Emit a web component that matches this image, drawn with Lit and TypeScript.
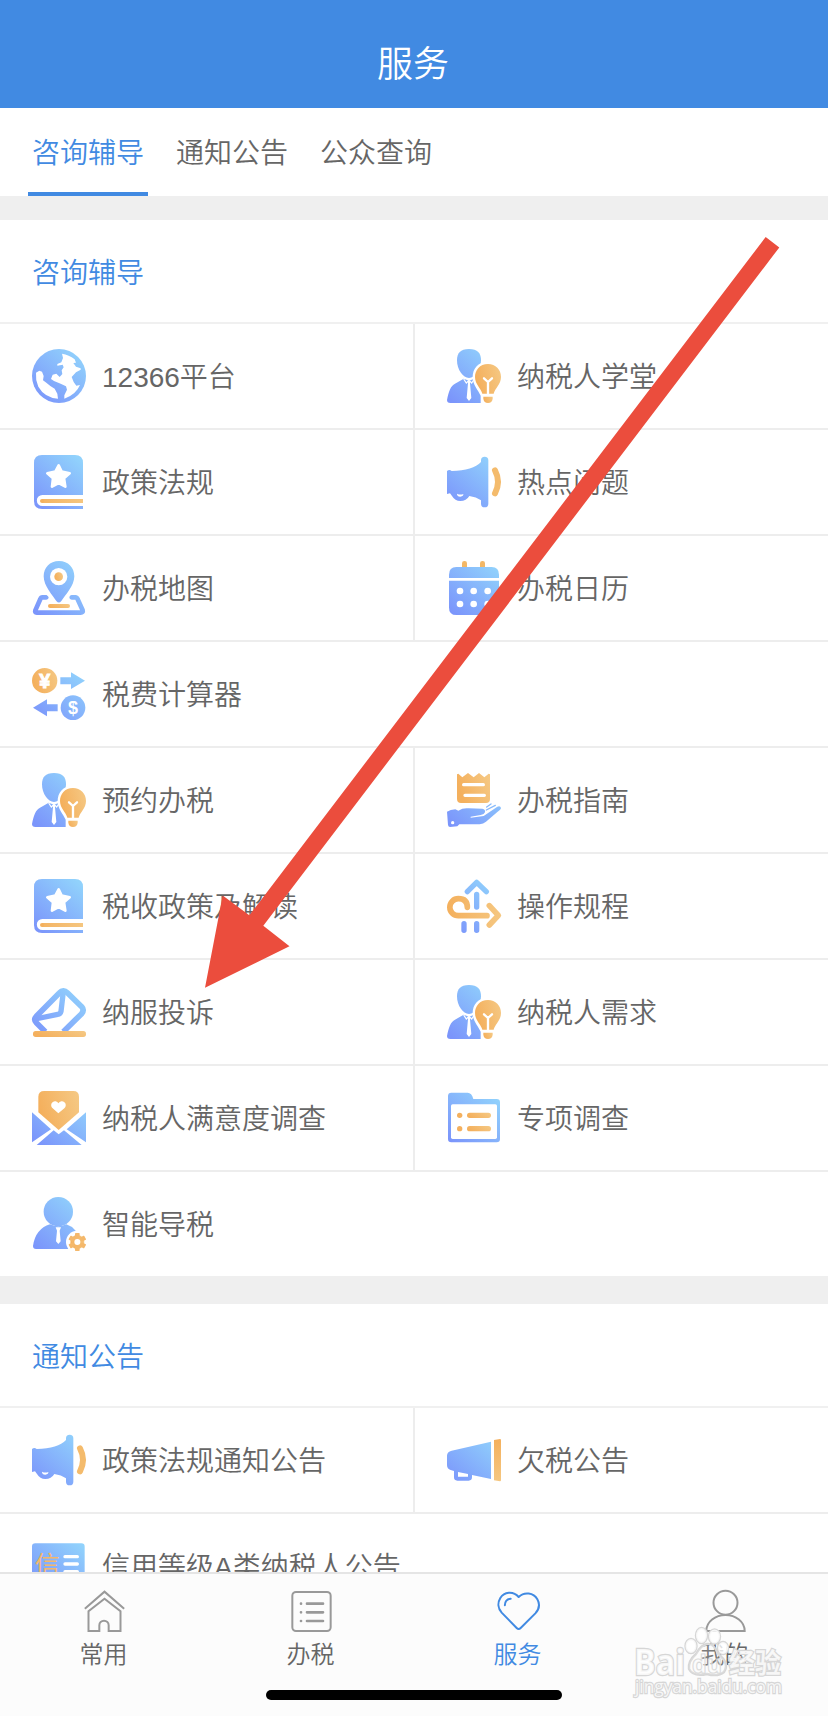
import { LitElement, html, css, svg } from "lit";
import { customElement, property } from "lit/decorators.js";

const book = svg`
  <path fill="url(#b)" d="M30 0H129Q153 0 153 24V162H30Q6 162 6 138V24Q6 0 30 0Z"/>
  <path fill="#fff" d="M160 120H31A16.500 16.500 0 0 0 31 153H160Z"/>
  <path d="M30 138H153" stroke="url(#ou)" stroke-width="12"/><circle cx="30" cy="138" r="6" fill="#f4b05e"/>
  <path fill="#fff" stroke="#fff" stroke-width="8" stroke-linejoin="round" d="M80 31L89 50L113 55L96 70L100 95L80 84L60 95L63 70L46 55L70 50Z"/>`;

const advisor = svg`
  <path fill="url(#b)" d="M66 0C92 0 102 12 102 34C102 62 84 87 66 87C48 87 30 62 30 34C30 12 40 0 66 0Z"/>
  <path fill="url(#b)" d="M0 153C5 128 11 110 24 104L50 89L66 95L82 89L102 99V162H10Q0 162 0 153Z"/>
  <path fill="none" stroke="#fff" stroke-width="3.500" d="M50 90L58 102L66 94L74 102L82 90"/>
  <path fill="#fff" d="M62 95H70L69 103L73 147L66 156L59 147L63 103Z"/>
  <path fill="#fff" d="M123 38C92 38 77 60 77 84C77 108 94 124 101 140V162H145V140C154 124 170 108 170 84C170 56 150 38 123 38Z"/>
  <path fill="url(#o)" d="M123 45C98 45 84 64 84 84C84 106 102 118 106 134H140C144 118 162 106 162 84C162 62 146 45 123 45Z"/>
  <path fill="url(#o)" d="M109 143H137V149Q135 162 123 162Q111 162 109 149Z"/>
  <path fill="none" stroke="#fff" stroke-width="7" stroke-linecap="round" stroke-linejoin="round" d="M111 88L123 99L135 88M123 100V134"/>`;

const speaker = svg`
  <path fill="url(#b)" d="M0 48Q7 42 14 48Q78 47 102 21V16A11 11 0 0 1 124 16V146A11 11 0 0 1 102 146V136Q88 126 67 123Q58 138 40 138Q24 138 15 123L9 115L0 117Z"/>
  <path fill="#fff" d="M30 116Q40 121 49 117Q50 124 40 125Q30 125 30 116Z"/>
  <path fill="none" stroke="#f4bb6c" stroke-width="18" stroke-linecap="round" d="M144 46Q162 80 144 115"/>`;

const ICONS: Record<string, unknown> = {
  globe: svg`
    <circle cx="81" cy="81" r="81" fill="url(#b)"/>
    <path fill="#fff" d="M12 71L22 65L30 68L35 81L33 94L43 101L55 111L68 119L76 134L78 149Q38 146 19 113Q10 92 12 71Z"/>
    <path fill="#fff" d="M90 14Q111 17 128 31L132 41L124 42L132 53L146 58V62L132 70L119 84L125 99L133 110L144 108Q132 137 97 149V139L105 122L102 112L86 104L66 96L57 90L62 77L73 74L83 84L91 75L89 64L95 55L92 47L76 50V45L88 40L93 27Z"/>`,
  book,
  advisor,
  speaker,
  map: svg`
    <path fill="none" stroke="url(#b)" stroke-width="14" stroke-linecap="round" stroke-linejoin="round" d="M43 109H31Q27 109 25 114L10 148Q8 155 14 155H146Q154 155 152 148L137 115Q135 109 130 109H119"/>
    <path fill="#fff" d="M40 98H120L81 135Z"/>
    <path fill="url(#b)" d="M81 0C109 0 127 20 127 46C127 75 99 103 88 120Q81 129 73 120C62 103 35 75 35 46C35 20 53 0 81 0Z"/>
    <circle cx="80" cy="47" r="26" fill="#fff"/><circle cx="80" cy="47" r="13" fill="url(#o)"/>
    <rect x="48" y="129" width="66" height="12" rx="6" fill="url(#o)"/>`,
  calendar: svg`
    <rect x="45" y="0" width="15" height="26" rx="7" fill="#f4b866"/><rect x="99" y="0" width="15" height="26" rx="7" fill="#f4b866"/>
    <path fill="url(#b)" d="M28 18H134Q156 18 156 41V51H6V41Q6 18 28 18Z"/>
    <path fill="url(#b)" d="M6 59H156V140Q156 162 134 162H28Q6 162 6 140Z"/>
    ${[39, 80, 122].map(x => [90, 129].map(y => svg`<circle cx=${x} cy=${y} r="10" fill="#fff"/>`))}`,
  exchange: svg`
    <circle cx="38" cy="41" r="38" fill="url(#o)"/><circle cx="123" cy="122" r="37" fill="url(#b)"/>
    <path fill="url(#b)" d="M85 31H117V16L159 41L117 66V52H85Z"/>
    <path fill="url(#b)" d="M77 112H45V97L3 122L45 148V133H77Z"/>
    <text class="coin" x="38" y="62" font-size="59" stroke="#fff" stroke-width="3">¥</text><text class="coin" x="123" y="141" font-size="54">$</text>`,
  receipt: svg`
    <path fill="url(#o)" d="M30 4L34 2L46 13L63 0L80 13L96 0L112 13L125 2L129 4V78Q129 90 117 90H42Q30 90 30 78Z"/>
    <path stroke="#fff" stroke-width="10" stroke-linecap="round" d="M50 35H109M54 67H112"/>
    <path fill="url(#b)" d="M0 116Q10 110 25 109L34 113Q48 104 65 106L106 107Q116 109 114 118Q112 124 101 126L71 131V134L110 129L151 101Q160 97 162 105Q162 110 151 117L117 146Q109 153 98 154H37L31 160L9 162Q4 162 3 156Z"/>
    <path stroke="url(#b)" stroke-width="4" stroke-linecap="round" d="M119 102L132 93M118 111L145 97"/>
    <circle cx="17" cy="149" r="5" fill="#fff"/>`,
  route: svg`
    <path fill="none" stroke="url(#b)" stroke-width="16" stroke-linecap="round" stroke-linejoin="round" d="M61 38L89 10L118 38M89.010 46L89 84M51.010 134L51 154M89.010 134L89 154"/>
    <path fill="none" stroke="url(#ou)" stroke-width="17" stroke-linecap="round" stroke-linejoin="round" d="M61 85Q61 59 34 59A25.500 25.500 0 0 0 34 110H120M127 80L154 109L127 138"/>`,
  letter: svg`
    <path fill="none" stroke="url(#b)" stroke-width="17" stroke-linejoin="round" d="M40 140L13 113Q4 104 13 94L82 24Q94 11 106 23L149 65Q158 75 149 86L94 140"/>
    <path fill="none" stroke="url(#b)" stroke-width="16" stroke-linejoin="round" d="M94 20L87 79Q85 87 77 88L10 102"/>
    <rect x="3" y="138" width="159" height="18" rx="8" fill="url(#o)"/>`,
  survey: svg`
    <path fill="url(#b)" d="M0 64L57 115L0 154ZM162 64L104 115L162 154ZM14 162L65 118L80 130L96 118L149 162Z"/>
    <path fill="url(#o)" d="M37 0H124Q141 0 141 17V64L80 117L19 64V17Q19 0 37 0Z"/>
    <path fill="#fff" d="M79 67L62 52C52 42 61 29 71 31Q77 32 79 37Q82 32 88 31C98 29 107 42 97 52Z"/>`,
  folder: svg`
    <path fill="url(#b)" d="M13 5H62Q74 5 79 24H149Q159 24 159 34V144Q159 154 149 154H13Q3 154 3 144V15Q3 5 13 5Z"/>
    <rect x="12" y="40" width="138" height="104" rx="5" fill="#fff"/>
    <circle cx="38" cy="73" r="8" fill="#f4b05e"/><circle cx="38" cy="113" r="8" fill="#f4b05e"/>
    <rect x="60" y="65" width="72" height="16" rx="8" fill="url(#o)"/><rect x="60" y="105" width="72" height="16" rx="8" fill="url(#o)"/>`,
  agent: svg`
    <circle cx="79" cy="44" r="44" fill="url(#b)"/>
    <path fill="url(#b)" d="M54 82Q79 94 103 82Q119 87 131 101L120 156H12Q3 156 3 147Q10 96 54 82Z"/>
    <path fill="#fff" d="M71 91H87L83 101L86 133L79 141L72 133L75 101Z"/>
    <circle cx="136" cy="135" r="34" fill="#fff"/>
    <circle cx="136" cy="135" r="21" fill="url(#o)"/>
    ${[0, 60, 120, 180, 240, 300].map(a => svg`<rect x="129" y="108" width="14" height="16" rx="2" fill="#f4b86b" transform="rotate(${a} 136 135)"/>`)}
    <circle cx="136" cy="135" r="9" fill="#fff"/>`,
  horn: svg`
    <path fill="url(#b)" d="M14 53L132 26V138L75 126V133Q75 143 65 143H31Q21 143 21 133V114L11 111Q0 108 0 96V68Q0 56 14 53Z"/>
    <path fill="#fff" d="M33 117L63 123V131H33Z"/>
    <path fill="url(#ov)" d="M141 21L159 18Q162 18 162 22V141Q162 145 159 145L141 142Z"/>`,
  credit: svg`
    <rect x="0" y="13" width="158" height="136" rx="10" fill="url(#b)"/>
    <text class="credit" x="46" y="104" font-size="75">信</text>
    <path stroke="#fff" stroke-width="10" stroke-linecap="round" d="M99 53H136M99 75H136M99 98H136"/>`,
};

@customElement("service-icon")
class ServiceIcon extends LitElement {
  @property() name = "";
  static styles = css`
    :host { display: block; width: 54px; height: 54px; flex: none; }
    svg { display: block; width: 54px; height: 54px; overflow: visible; }
    .coin { font-family: "Liberation Sans", sans-serif; font-weight: 700; text-anchor: middle; fill: #fff; }
    .credit { font-family: "Noto Sans CJK SC", sans-serif; font-weight: 400; text-anchor: middle; fill: #f4b76a; }
  `;
  render() {
    return html`<svg viewBox="0 0 162 162">
      <defs>
        <linearGradient id="b" gradientUnits="userSpaceOnUse" x1="15" y1="155" x2="140" y2="10"><stop stop-color="#7b95fb"/><stop offset="1" stop-color="#91d2fc"/></linearGradient>
        <linearGradient id="o" x1="0" y1="0.300" x2="1" y2="0"><stop stop-color="#f4b05d"/><stop offset="1" stop-color="#f5c985"/></linearGradient>
        <linearGradient id="ou" gradientUnits="userSpaceOnUse" x1="0" y1="0" x2="162" y2="0"><stop stop-color="#f4b05d"/><stop offset="1" stop-color="#f5c781"/></linearGradient>
        <linearGradient id="ov" x1="0" y1="0" x2="0" y2="1"><stop stop-color="#f4b05d"/><stop offset="1" stop-color="#f5c781"/></linearGradient>
      </defs>${ICONS[this.name]}</svg>`;
  }
}

type Item = [icon: string, label: string];
interface Section { title: string; rows: Item[][]; }

const SECTIONS: Section[] = [
  { title: "咨询辅导", rows: [
    [["globe", "12366平台"], ["advisor", "纳税人学堂"]],
    [["book", "政策法规"], ["speaker", "热点问题"]],
    [["map", "办税地图"], ["calendar", "办税日历"]],
    [["exchange", "税费计算器"]],
    [["advisor", "预约办税"], ["receipt", "办税指南"]],
    [["book", "税收政策及解读"], ["route", "操作规程"]],
    [["letter", "纳服投诉"], ["advisor", "纳税人需求"]],
    [["survey", "纳税人满意度调查"], ["folder", "专项调查"]],
    [["agent", "智能导税"]],
  ] },
  { title: "通知公告", rows: [
    [["speaker", "政策法规通知公告"], ["horn", "欠税公告"]],
    [["credit", "信用等级A类纳税人公告"]],
  ] },
];

const NAV = [
  { label: "常用", art: svg`<path d="M5.500 56L64.500 5L123.500 56"/><path d="M49 123H16.500V64L64.500 26L112.500 64V123H77V106A14 14 0 0 0 49 106Z"/>` },
  { label: "办税", art: svg`<rect x="7" y="6" width="115" height="117" rx="11"/><path stroke-width="8" stroke-linecap="round" d="M51 41H99M51 67H99M51 93H99M33 41H33.100M33 67H33.100M33 93H33.100"/>` },
  { label: "服务", on: true, art: svg`<path stroke-linejoin="round" d="M65 21C49 2 21 5 10 24C1 39 3 56 14 68L59 114Q65 120 71 114L115 70C126 58 129 42 121 28C110 8 82 4 65 21Z"/><path stroke-linecap="round" d="M23.500 46Q24 28 41 26"/>` },
  { label: "我的", art: svg`<circle cx="64.500" cy="38" r="36"/><path d="M7 123C7 95 34 75 64.500 75S122 95 122 123Z"/>` },
];

@customElement("app-root")
class AppRoot extends LitElement {
  static styles = css`
    :host {
      display: flex; flex-direction: column; position: relative; box-sizing: border-box;
      width: 828px; height: 1716px; overflow: hidden; background: #fff; color: #666;
      font-family: "Liberation Sans", "Noto Sans CJK SC", sans-serif; font-size: 28px; font-weight: 350; line-height: 40px;
    }
    * { box-sizing: border-box; }
    header { flex: none; height: 108px; padding-top: 22px; padding-right: 2px; display: grid; place-items: center; background: #418ae2; color: #fff; font-size: 36px; }
    .tabs { flex: none; display: flex; gap: 24px; height: 88px; padding-left: 28px; }
    .tab { display: flex; align-items: center; width: 120px; justify-content: center; border-bottom: 4px solid transparent; padding-top: 8px; }
    .tab.on { color: #418ae2; border-color: #418ae2; }
    main { flex: 1; min-height: 0; overflow: hidden; background: #efefef; padding-top: 24px; display: flex; flex-direction: column; gap: 28px; }
    section { flex: none; background: #fff; }
    h2 { margin: 0; height: 104px; padding: 5px 0 0 32px; display: flex; align-items: center; font-size: 28px; font-weight: inherit; color: #418ae2; border-bottom: 2px solid #f0f0f0; }
    .row { display: flex; height: 106px; border-bottom: 2px solid #ededed; }
    .row:last-child { height: 104px; border-bottom: 0; }
    .cell { flex: 1; display: flex; align-items: center; gap: 16px; padding-left: 32px; }
    .cell span { padding-top: 4px; }
    .pair .cell:first-child { flex: 0 0 415px; border-right: 2px solid #ededed; }
    footer { flex: none; height: 144px; border-top: 2px solid #e5e5e5; background: #fcfcfc; display: flex; flex-direction: column; align-items: center; }
    nav { display: grid; grid-template-columns: repeat(4, 1fr); width: 100%; height: 116px; padding-top: 16px; }
    .dest { display: flex; flex-direction: column; align-items: center; font-size: 24px; line-height: 36px; gap: 5px; }
    .dest svg { width: 42px; height: 42px; fill: none; stroke: #999; stroke-width: 6; overflow: visible; }
    .dest.on { color: #418ae2; }
    .dest.on svg { stroke: #418ae2; }
    .pill { width: 296px; height: 10px; border-radius: 5px; background: #000; }
    .pointer { position: absolute; inset: 0; width: 828px; height: 1716px; fill: #eb4d3d; }
    .mark { position: absolute; left: 630px; top: 1620px; width: 160px; height: 90px; fill: #fff; fill-opacity: .8; stroke: #d6d6d6; stroke-width: 2.400; paint-order: stroke; }
    .brand { font: 700 36px "Open Sans", "Noto Sans CJK SC", sans-serif; }
    .pad { fill-opacity: .15; }
    .paw { font-size: 25px; fill-opacity: .3; stroke-width: 1.200; }
    .cn { font-size: 27px; }
    .site { font: 400 19px "Open Sans", sans-serif; }
  `;
  render() {
    return html`
      <header>服务</header>
      <div class="tabs"><div class="tab on">咨询辅导</div><div class="tab">通知公告</div><div class="tab">公众查询</div></div>
      <main>${SECTIONS.map(s => html`<section><h2>${s.title}</h2>
        ${s.rows.map(r => html`<div class="row ${r.length > 1 ? "pair" : ""}">${r.map(([icon, label]) => html`<div class="cell"><service-icon name=${icon}></service-icon><span>${label}</span></div>`)}</div>`)}
      </section>`)}</main>
      <footer>
        <nav>${NAV.map(n => html`<div class="dest ${n.on ? "on" : ""}"><svg viewBox="0 0 126 126">${n.art}</svg><span>${n.label}</span></div>`)}</nav>
        <div class="pill"></div>
      </footer>
      <svg class="pointer" viewBox="0 0 828 1716"><path d="M765.700 237L779.300 247.400L263.300 925.700L289.500 946.300L205 987.700L222.700 895.600L249.300 915.300Z"/></svg>
      <svg class="mark" viewBox="0 0 160 90">
        <ellipse cx="61" cy="26" rx="5.500" ry="7"/><ellipse cx="71.500" cy="15.500" rx="5.500" ry="7.500"/><ellipse cx="84.500" cy="16.500" rx="5.500" ry="7"/><ellipse cx="93" cy="28" rx="5" ry="6"/>
        <path class="pad" d="M77 24Q84 23 88 34Q100 43 94 52Q88 57 77 54Q63 57 59 49Q58 41 66 34Q71 25 77 24Z"/>
        <text class="brand" x="4" y="55" textLength="51" lengthAdjust="spacingAndGlyphs">Bai</text>
        <text class="brand paw" x="62" y="53" textLength="30" lengthAdjust="spacingAndGlyphs">du</text>
        <text class="brand cn" x="99" y="53" textLength="52" lengthAdjust="spacingAndGlyphs">经验</text>
        <text class="site" x="5" y="73" textLength="147" lengthAdjust="spacingAndGlyphs">jingyan.baidu.com</text>
      </svg>`;
  }
}
